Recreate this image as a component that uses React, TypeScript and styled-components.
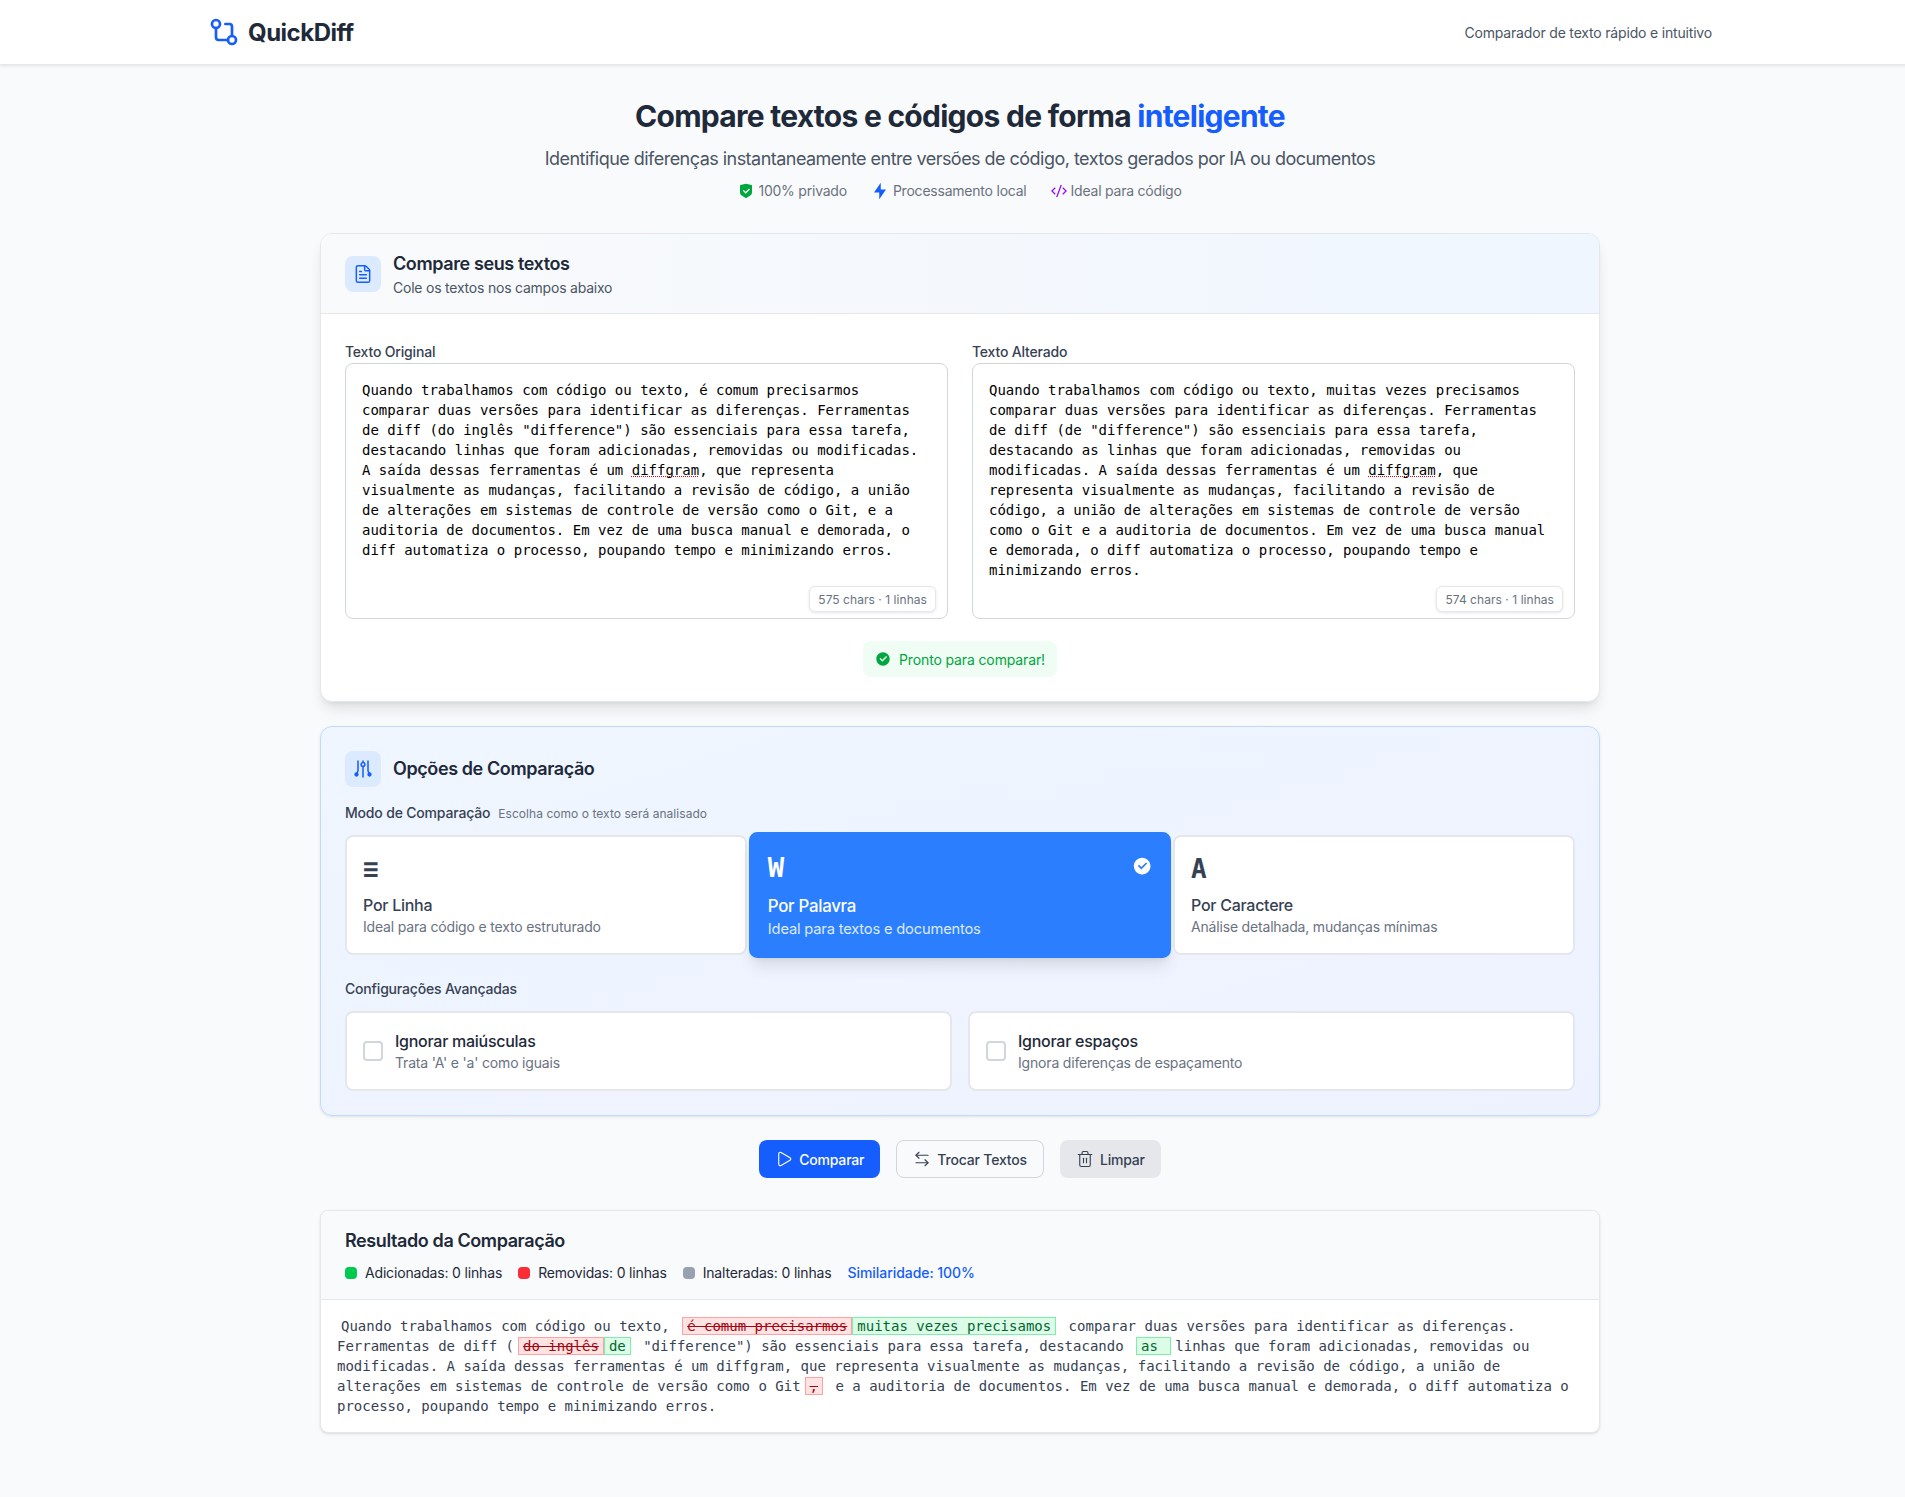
import styled, { createGlobalStyle } from "styled-components";
import { RiShieldCheckFill, RiFlashlightFill, RiCodeSSlashLine, RiCheckboxCircleFill } from "react-icons/ri";
import { FileText, Play, ArrowLeftRight, Trash2 } from "lucide-react";

const GlobalStyle = createGlobalStyle`
  html { overflow-x: hidden; }
  body {
    margin: 0;
    width: 1920px;
    background: #f9fafb;
    font-family: Inter, "Noto Sans", sans-serif;
    letter-spacing: -0.18px;
    color: #1e2939;
  }
  * { box-sizing: border-box; }
`;

const mono = `"DejaVu Sans Mono", "Liberation Mono", monospace`;

const TopBar = styled.header`
  height: 65px;
  background: #fff;
  border-bottom: 1px solid #e5e7eb;
  box-shadow: 0 1px 3px rgba(0, 0, 0, 0.1);
`;

const TopBarInner = styled.div`
  width: 1536px;
  height: 100%;
  margin: 0 auto;
  padding: 0 16px;
  display: flex;
  align-items: center;
  justify-content: space-between;
`;

const Brand = styled.div`
  display: flex;
  align-items: center;
  gap: 8px;
  font-size: 24px;
  font-weight: 700;
  letter-spacing: -0.5px;
  color: #1e2939;
`;

const Tagline = styled.span`
  font-size: 14px;
  letter-spacing: -0.18px;
  color: #4a5565;
`;

const Main = styled.main`
  width: 1280px;
  margin: 0 auto;
  padding: 33px 0 64px;
`;

const Hero = styled.section`
  text-align: center;
  margin-bottom: 32px;
`;

const HeroTitle = styled.h1`
  margin: 0 0 11px;
  font-size: 30px;
  line-height: 36px;
  font-weight: 700;
  letter-spacing: -0.73px;
  color: #1e2939;
`;

const Accent = styled.span`
  color: #155dfc;
`;

const HeroText = styled.p`
  margin: 0 0 8px;
  font-size: 18px;
  line-height: 28px;
  letter-spacing: -0.53px;
  color: #4a5565;
`;

const Perks = styled.div`
  display: flex;
  justify-content: center;
  gap: 24px;
  font-size: 14px;
  line-height: 20px;
  letter-spacing: -0.22px;
  color: #6a7282;
`;

const Perk = styled.span<{ $tone: string }>`
  display: flex;
  align-items: center;
  gap: 4px;
  svg {
    color: ${(p) => p.$tone};
  }
`;

const InputCard = styled.section`
  background: #fff;
  border: 1px solid #e5e7eb;
  border-radius: 12px;
  box-shadow: 0 10px 15px -3px rgba(0, 0, 0, 0.1), 0 4px 6px -4px rgba(0, 0, 0, 0.1);
  margin-bottom: 24px;
  overflow: hidden;
`;

const InputHead = styled.div`
  display: flex;
  align-items: center;
  gap: 12px;
  height: 80px;
  padding: 0 24px;
  background: linear-gradient(to right, #f9fafb, #eff6ff);
  border-bottom: 1px solid #e5e7eb;
`;

const IconBox = styled.div`
  width: 36px;
  height: 36px;
  flex: none;
  display: flex;
  align-items: center;
  justify-content: center;
  border-radius: 8px;
  background: #dbeafe;
  color: #155dfc;
`;

const SectionTitle = styled.h2`
  margin: 0;
  font-size: 18px;
  line-height: 28px;
  font-weight: 600;
  letter-spacing: -0.4px;
  color: #1e2939;
`;

const SectionSub = styled.p`
  margin: 0;
  font-size: 14px;
  line-height: 20px;
  letter-spacing: -0.22px;
  color: #4a5565;
`;

const InputBody = styled.div`
  padding: 28px 24px 24px;
  display: flex;
  flex-direction: column;
  align-items: center;
`;

const Columns = styled.div`
  width: 100%;
  display: grid;
  grid-template-columns: 1fr 1fr;
  gap: 24px;
  margin-bottom: 22px;
`;

const FieldLabel = styled.label`
  display: block;
  margin-bottom: 1px;
  font-size: 14px;
  line-height: 20px;
  font-weight: 500;
  color: #364153;
`;

const TextBox = styled.div`
  position: relative;
  height: 256px;
  padding: 16px;
  background: #fff;
  border: 1px solid #d1d5dc;
  border-radius: 8px;
  font-family: ${mono};
  font-size: 14px;
  line-height: 20px;
  letter-spacing: 0;
  color: #000;
`;

const Misspelled = styled.span`
  text-decoration: underline dotted #e7000b;
  text-decoration-thickness: 1px;
`;

const Counter = styled.span`
  position: absolute;
  right: 11px;
  bottom: 6px;
  padding: 5px 8px 3px;
  background: #fff;
  border: 1px solid #e5e7eb;
  border-radius: 6px;
  box-shadow: 0 1px 3px rgba(0, 0, 0, 0.1);
  font-family: Inter, sans-serif;
  font-size: 12px;
  line-height: 16px;
  letter-spacing: 0.05px;
  color: #6a7282;
`;

const Ready = styled.div`
  display: flex;
  align-items: center;
  gap: 8px;
  height: 36px;
  padding: 0 12px;
  border-radius: 8px;
  background: #f0fdf4;
  color: #00a63e;
  font-size: 14px;
  letter-spacing: -0.13px;
`;

const OptionsCard = styled.section`
  padding: 24px;
  background: linear-gradient(to bottom right, #eff6ff, #eef2ff);
  border: 1px solid #bedbff;
  border-radius: 12px;
  box-shadow: 0 1px 3px rgba(0, 0, 0, 0.1);
  margin-bottom: 24px;
`;

const OptionsHead = styled.div`
  display: flex;
  align-items: center;
  gap: 12px;
  margin-bottom: 16px;
`;

const GroupLabel = styled.div<{ $gap: number }>`
  display: flex;
  align-items: baseline;
  gap: 8px;
  margin-bottom: ${(p) => p.$gap}px;
  font-size: 14px;
  line-height: 20px;
  font-weight: 500;
  color: #364153;
`;

const Hint = styled.span`
  font-size: 12px;
  font-weight: 400;
  letter-spacing: 0.05px;
  color: #6a7282;
`;

const Modes = styled.div`
  display: grid;
  grid-template-columns: repeat(3, 1fr);
  gap: 12px;
  margin-bottom: 24px;
`;

const ModeCard = styled.div<{ $active?: boolean }>`
  position: relative;
  height: 120px;
  padding: 16px;
  background: ${(p) => (p.$active ? "#2b7fff" : "#fff")};
  border: 2px solid ${(p) => (p.$active ? "#2b7fff" : "#e5e7eb")};
  border-radius: 8px;
  color: ${(p) => (p.$active ? "#fff" : "#364153")};
  transform: ${(p) => (p.$active ? "scale(1.05)" : "none")};
  box-shadow: ${(p) =>
    p.$active ? "0 10px 15px -3px rgba(0,0,0,.1), 0 4px 6px -4px rgba(0,0,0,.1)" : "none"};
`;

const ModeGlyph = styled.div`
  height: 32px;
  margin-bottom: 8px;
  font-family: ${mono};
  font-size: 26px;
  line-height: 32px;
  font-weight: 700;
  letter-spacing: 0;
`;

const ModeTitle = styled.div`
  font-size: 16px;
  line-height: 24px;
  font-weight: 500;
  letter-spacing: -0.27px;
`;

const ModeDesc = styled.div<{ $active?: boolean }>`
  font-size: 14px;
  line-height: 20px;
  color: ${(p) => (p.$active ? "#dbeafe" : "#6a7282")};
`;

const ModeCheck = styled.span`
  position: absolute;
  top: 21px;
  right: 16px;
  display: flex;
  color: #fff;
`;

const Toggles = styled.div`
  display: grid;
  grid-template-columns: 1fr 1fr;
  gap: 16px;
`;

const Toggle = styled.div`
  display: flex;
  align-items: center;
  gap: 12px;
  height: 80px;
  padding: 0 16px;
  background: #fff;
  border: 2px solid #e5e7eb;
  border-radius: 8px;
`;

const CheckBox = styled.span`
  width: 20px;
  height: 20px;
  flex: none;
  background: #fff;
  border: 2px solid #d1d5dc;
  border-radius: 4px;
`;

const ToggleTitle = styled.div`
  font-size: 16px;
  line-height: 24px;
  font-weight: 500;
  letter-spacing: -0.27px;
  color: #1e2939;
`;

const ToggleDesc = styled.div`
  font-size: 14px;
  line-height: 20px;
  color: #6a7282;
`;

const Actions = styled.div`
  display: flex;
  justify-content: center;
  gap: 16px;
  margin-bottom: 32px;
`;

const Button = styled.button<{ $kind: "primary" | "outline" | "muted" }>`
  display: flex;
  align-items: center;
  gap: 6px;
  height: 38px;
  padding: 0 16px;
  border-radius: 8px;
  font-family: Inter, sans-serif;
  font-size: 14px;
  font-weight: 500;
  letter-spacing: -0.18px;
  background: ${(p) =>
    p.$kind === "primary" ? "#155dfc" : p.$kind === "outline" ? "transparent" : "#e5e7eb"};
  color: ${(p) => (p.$kind === "primary" ? "#fff" : "#364153")};
  border: ${(p) => (p.$kind === "outline" ? "1px solid #d1d5dc" : "none")};
`;

const ResultCard = styled.section`
  background: #fff;
  border: 1px solid #e5e7eb;
  border-radius: 8px;
  box-shadow: 0 1px 3px rgba(0, 0, 0, 0.1), 0 1px 2px -1px rgba(0, 0, 0, 0.1);
  overflow: hidden;
`;

const ResultHead = styled.div`
  height: 89px;
  padding: 16px 24px;
  background: #f9fafb;
  border-bottom: 1px solid #e5e7eb;
`;

const Stats = styled.div`
  display: flex;
  align-items: center;
  gap: 16px;
  margin-top: 8px;
  font-size: 14px;
  line-height: 20px;
  letter-spacing: -0.17px;
  color: #1e2939;
`;

const Stat = styled.span`
  display: flex;
  align-items: center;
  gap: 8px;
`;

const Dot = styled.span<{ $color: string }>`
  width: 12px;
  height: 12px;
  border-radius: 4px;
  background: ${(p) => p.$color};
`;

const Similarity = styled.span`
  color: #155dfc;
  font-weight: 500;
  letter-spacing: -0.05px;
`;

const DiffBody = styled.div`
  padding: 16px;
  font-family: ${mono};
  font-size: 14px;
  line-height: 20px;
  letter-spacing: 0;
  color: #364153;
  white-space: pre-wrap;
`;

const Same = styled.span`
  padding: 0 4px;
`;

const Removed = styled.span`
  padding: 0 4px;
  background: #ffe2e2;
  border: 1px solid #ffa2a2;
  color: #9f0712;
  text-decoration: line-through;
`;

const Added = styled.span`
  padding: 0 4px;
  background: #dcfce7;
  border: 1px solid #7bf1a8;
  color: #016630;
`;

function LogoIcon() {
  return (
    <svg width="32" height="32" viewBox="0 0 24 24" fill="none" stroke="#155dfc" strokeWidth="2" strokeLinecap="round">
      <circle cx="6" cy="6" r="3" />
      <circle cx="18" cy="18" r="3" />
      <path d="M13 6h3a2 2 0 0 1 2 2v7" />
      <path d="M6 9v7a2 2 0 0 0 2 2h7" />
    </svg>
  );
}

function SlidersIcon() {
  return (
    <svg width="18" height="18" viewBox="0 0 18 18" fill="none" stroke="currentColor" strokeWidth="1.5" strokeLinecap="round">
      <path d="M4 1v9.5c0 1-.6 1.5-1 2.5" />
      <circle cx="2.5" cy="14.5" r="1.4" fill="currentColor" />
      <circle cx="9" cy="4.5" r="1.9" />
      <path d="M9 1v1.5M9 6.5V17" />
      <path d="M14 1v9.5c0 1 .6 1.5 1 2.5" />
      <circle cx="15.5" cy="14.5" r="1.4" fill="currentColor" />
    </svg>
  );
}

const modes = [
  { glyph: "≡", title: "Por Linha", desc: "Ideal para código e texto estruturado" },
  { glyph: "W", title: "Por Palavra", desc: "Ideal para textos e documentos", active: true },
  { glyph: "A", title: "Por Caractere", desc: "Análise detalhada, mudanças mínimas" },
];

const toggles = [
  { title: "Ignorar maiúsculas", desc: "Trata 'A' e 'a' como iguais" },
  { title: "Ignorar espaços", desc: "Ignora diferenças de espaçamento" },
];

export default function App() {
  return (
    <>
      <GlobalStyle />
      <TopBar>
        <TopBarInner>
          <Brand>
            <LogoIcon />
            QuickDiff
          </Brand>
          <Tagline>Comparador de texto rápido e intuitivo</Tagline>
        </TopBarInner>
      </TopBar>
      <Main>
        <Hero>
          <HeroTitle>
            Compare textos e códigos de forma <Accent>inteligente</Accent>
          </HeroTitle>
          <HeroText>
            Identifique diferenças instantaneamente entre versões de código, textos gerados por IA ou documentos
          </HeroText>
          <Perks>
            <Perk $tone="#00a63e"><RiShieldCheckFill size={16} /> 100% privado</Perk>
            <Perk $tone="#155dfc"><RiFlashlightFill size={18} /> Processamento local</Perk>
            <Perk $tone="#9810fa"><RiCodeSSlashLine size={16} /> Ideal para código</Perk>
          </Perks>
        </Hero>

        <InputCard>
          <InputHead>
            <IconBox><FileText size={20} strokeWidth={1.75} /></IconBox>
            <div>
              <SectionTitle>Compare seus textos</SectionTitle>
              <SectionSub>Cole os textos nos campos abaixo</SectionSub>
            </div>
          </InputHead>
          <InputBody>
            <Columns>
              <div>
                <FieldLabel>Texto Original</FieldLabel>
                <TextBox>
                  Quando trabalhamos com código ou texto, é comum precisarmos comparar duas versões para identificar as diferenças. Ferramentas de diff (do inglês "difference") são essenciais para essa tarefa, destacando linhas que foram adicionadas, removidas ou modificadas. A saída dessas ferramentas é um <Misspelled>diffgram</Misspelled>, que representa visualmente as mudanças, facilitando a revisão de código, a união de alterações em sistemas de controle de versão como o Git, e a auditoria de documentos. Em vez de uma busca manual e demorada, o diff automatiza o processo, poupando tempo e minimizando erros.
                  <Counter>575 chars · 1 linhas</Counter>
                </TextBox>
              </div>
              <div>
                <FieldLabel>Texto Alterado</FieldLabel>
                <TextBox>
                  Quando trabalhamos com código ou texto, muitas vezes precisamos comparar duas versões para identificar as diferenças. Ferramentas de diff (de "difference") são essenciais para essa tarefa, destacando as linhas que foram adicionadas, removidas ou modificadas. A saída dessas ferramentas é um <Misspelled>diffgram</Misspelled>, que representa visualmente as mudanças, facilitando a revisão de código, a união de alterações em sistemas de controle de versão como o Git e a auditoria de documentos. Em vez de uma busca manual e demorada, o diff automatiza o processo, poupando tempo e minimizando erros.
                  <Counter>574 chars · 1 linhas</Counter>
                </TextBox>
              </div>
            </Columns>
            <Ready>
              <RiCheckboxCircleFill size={16} />
              Pronto para comparar!
            </Ready>
          </InputBody>
        </InputCard>

        <OptionsCard>
          <OptionsHead>
            <IconBox><SlidersIcon /></IconBox>
            <SectionTitle>Opções de Comparação</SectionTitle>
          </OptionsHead>
          <GroupLabel $gap={11}>
            Modo de Comparação <Hint>Escolha como o texto será analisado</Hint>
          </GroupLabel>
          <Modes>
            {modes.map((m) => (
              <ModeCard key={m.title} $active={m.active}>
                <ModeGlyph>{m.glyph}</ModeGlyph>
                <ModeTitle>{m.title}</ModeTitle>
                <ModeDesc $active={m.active}>{m.desc}</ModeDesc>
                {m.active && <ModeCheck><RiCheckboxCircleFill size={19} /></ModeCheck>}
              </ModeCard>
            ))}
          </Modes>
          <GroupLabel $gap={12}>Configurações Avançadas</GroupLabel>
          <Toggles>
            {toggles.map((t) => (
              <Toggle key={t.title}>
                <CheckBox />
                <div>
                  <ToggleTitle>{t.title}</ToggleTitle>
                  <ToggleDesc>{t.desc}</ToggleDesc>
                </div>
              </Toggle>
            ))}
          </Toggles>
        </OptionsCard>

        <Actions>
          <Button $kind="primary"><Play size={18} strokeWidth={1.5} /> Comparar</Button>
          <Button $kind="outline"><ArrowLeftRight size={18} strokeWidth={1.5} /> Trocar Textos</Button>
          <Button $kind="muted"><Trash2 size={18} strokeWidth={1.5} /> Limpar</Button>
        </Actions>

        <ResultCard>
          <ResultHead>
            <SectionTitle>Resultado da Comparação</SectionTitle>
            <Stats>
              <Stat><Dot $color="#00c950" /> Adicionadas: 0 linhas</Stat>
              <Stat><Dot $color="#fb2c36" /> Removidas: 0 linhas</Stat>
              <Stat><Dot $color="#99a1af" /> Inalteradas: 0 linhas</Stat>
              <Similarity>Similaridade: 100%</Similarity>
            </Stats>
          </ResultHead>
          <DiffBody>
            <Same>Quando trabalhamos com código ou texto, </Same>
            <Removed>é comum precisarmos</Removed>
            <Added>muitas vezes precisamos</Added>
            <Same> comparar duas versões para identificar as diferenças. Ferramentas de diff (</Same>
            <Removed>do inglês</Removed>
            <Added>de</Added>
            <Same> "difference") são essenciais para essa tarefa, destacando </Same>
            <Added>as </Added>
            <Same>linhas que foram adicionadas, removidas ou modificadas. A saída dessas ferramentas é um diffgram, que representa visualmente as mudanças, facilitando a revisão de código, a união de alterações em sistemas de controle de versão como o Git</Same>
            <Removed>,</Removed>
            <Same> e a auditoria de documentos. Em vez de uma busca manual e demorada, o diff automatiza o processo, poupando tempo e minimizando erros.</Same>
          </DiffBody>
        </ResultCard>
      </Main>
    </>
  );
}
